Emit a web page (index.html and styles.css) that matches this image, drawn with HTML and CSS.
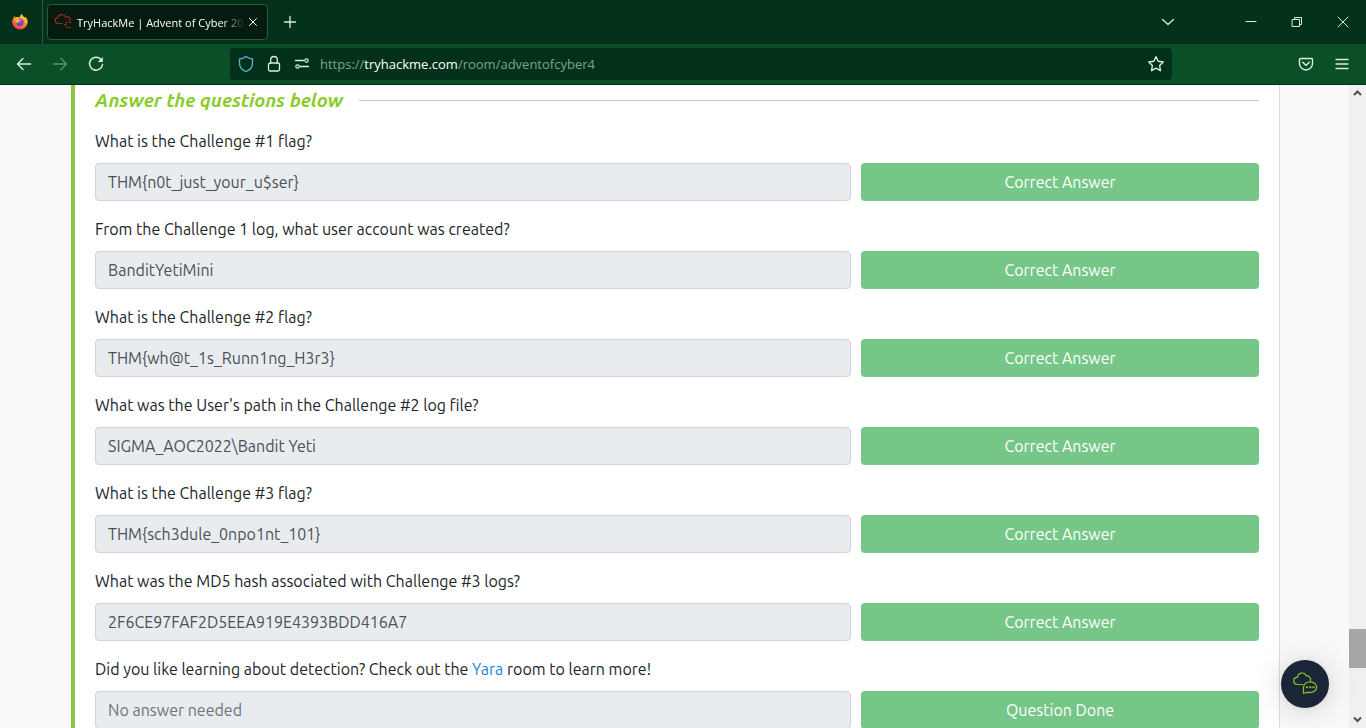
FILE: index.html
```html
<!DOCTYPE html>
<html lang="en">
<head>
<meta charset="utf-8">
<meta name="viewport" content="width=device-width, initial-scale=1">
<title>TryHackMe | Advent of Cyber 2022</title>
<link rel="stylesheet" href="styles.css">
</head>
<body>
<header class="browser">
  <div class="tabbar">
    <div class="pinned">
      <svg width="18" height="18" viewBox="0 0 18 18" aria-hidden="true">
        <defs>
          <linearGradient id="flame" x1="0.8" y1="0" x2="0.3" y2="1"><stop offset="0" stop-color="#ffe14a"/><stop offset="0.45" stop-color="#ff9a2a"/><stop offset="1" stop-color="#f0325c"/></linearGradient>
          <radialGradient id="globe" cx="0.5" cy="0.3" r="0.7"><stop offset="0" stop-color="#a257e8"/><stop offset="1" stop-color="#5b3bb5"/></radialGradient>
        </defs>
        <path fill="url(#flame)" d="M11 1c.3 1.600 1.600 2.400 2.600 3.500L14.500 4c1.600 1.600 2.400 3.500 2.200 5.600A7.800 7.800 0 0 1 1.200 9.500C1.100 7.200 2 5.400 3 4.200L3.400 3l1.300 1.400c1.300-.5 2.800-.5 4 .1C8.800 3 9.600 1.700 11 1z"/>
        <circle cx="9" cy="9.300" r="3.700" fill="url(#globe)"/>
        <path fill="#ffb02e" d="M4.700 5.600c1.400-.4 2.600 0 3.300.9l1.800.3c-.2 1-1.400 1.100-1.900 1.600.1 1.100-1 1.800-2.100 1.700-1-1.200-1.500-2.800-1.100-4.500z"/>
      </svg>
    </div>
    <div class="tab">
      <svg class="favicon" width="18" height="18" viewBox="0 0 18 18" fill="none" stroke="#a52523" stroke-width="1.200" stroke-linecap="round" aria-hidden="true">
        <path d="M8 10.500H4A3 3 0 0 1 3.600 4.600 4.300 4.300 0 0 1 11.600 4 3.200 3.200 0 0 1 16 8"/>
        <path d="M12 9.500h1.500M10.500 11.500h1.500M15.500 9.500h1M12.500 14.500h1.500M15.500 14.500h.8M11.500 12.500v.5" stroke-width="1.200"/>
      </svg>
      <span class="tab-title">TryHackMe | Advent of Cyber 20</span>
      <button class="icon-button tab-close" aria-label="Close tab"><svg width="16" height="16" viewBox="0 0 16 16"><path d="m4.500 4.500 7 7m0-7-7 7"/></svg></button>
    </div>
    <button class="icon-button new-tab" aria-label="New tab"><svg width="16" height="16" viewBox="0 0 16 16"><path d="M8 2.500v11M2.500 8h11" stroke-width="1.300"/></svg></button>
    <button class="icon-button list-tabs" aria-label="List all tabs"><svg width="16" height="16" viewBox="0 0 16 16"><path d="m2.500 5.500 5.500 5 5.500-5" stroke-width="1.300"/></svg></button>
    <div class="window-controls">
      <button class="icon-button" aria-label="Minimize"><svg width="12" height="12" viewBox="0 0 12 12"><path d="M1 5.500h10" stroke-width="1"/></svg></button>
      <button class="icon-button" aria-label="Restore"><svg width="12" height="12" viewBox="0 0 12 12"><path d="M1.500 3.500h7v7h-7zM3.500 3.500v-2h7v7h-2" stroke-width="1"/></svg></button>
      <button class="icon-button" aria-label="Close"><svg width="12" height="12" viewBox="0 0 12 12"><path d="m1 1 10 10m0-10L1 11" stroke-width="1"/></svg></button>
    </div>
  </div>
  <div class="toolbar">
    <nav class="nav-buttons" aria-label="History">
      <button class="icon-button" aria-label="Back"><svg width="18" height="18" viewBox="0 0 18 18"><path d="M15.500 9h-13m5.500-5.500L2.500 9 8 14.500" stroke-width="1.400"/></svg></button>
      <button class="icon-button" aria-label="Forward" disabled><svg width="18" height="18" viewBox="0 0 18 18"><path d="M2.500 9h13M10 3.500 15.500 9 10 14.500" stroke-width="1.400"/></svg></button>
      <button class="icon-button" aria-label="Reload"><svg width="18" height="18" viewBox="0 0 18 18"><path d="M13.800 4.200A6.500 6.500 0 1 0 15.500 9.500" stroke-width="1.500"/><path d="M15.800 2v5h-5z" fill="currentColor" stroke="none"/></svg></button>
    </nav>
    <div class="address">
      <button class="icon-button" aria-label="Tracking protection"><svg class="shield" width="18" height="18" viewBox="0 0 18 18"><defs><linearGradient id="shield" x1="1" y1="0" x2="0" y2="1"><stop offset="0" stop-color="#8a9cf0"/><stop offset="0.5" stop-color="#54b4e4"/><stop offset="1" stop-color="#3fc4d4"/></linearGradient></defs><path stroke="url(#shield)" stroke-width="1.300" d="M9 1.500q3 2.200 6.500 2.500v4c0 4-2.500 7-6.500 8.500C5 15 2.500 12 2.500 8V4Q6 3.700 9 1.500z"/></svg></button>
      <button class="icon-button" aria-label="Site security"><svg width="18" height="18" viewBox="0 0 18 18"><rect x="3.500" y="8" width="11" height="8" rx="1.500" stroke-width="1.300"/><path d="M5.700 8V4.800a3.300 3.300 0 0 1 6.600 0V8" stroke-width="1.300"/></svg></button>
      <button class="icon-button" aria-label="Site permissions"><svg width="18" height="18" viewBox="0 0 18 18"><path d="M2.500 5.500h8M7 11.500h8.500" stroke-width="1.300"/><circle cx="13.500" cy="5.500" r="1.700" stroke-width="1.200"/><circle cx="4.500" cy="11.500" r="1.700" stroke-width="1.200"/></svg></button>
      <a class="url" href="#">https://<span class="domain">tryhackme.com</span>/room/adventofcyber4</a>
      <button class="icon-button star" aria-label="Bookmark this page"><svg width="18" height="18" viewBox="0 0 18 18"><path d="m9 1.700 2.200 4.600 5.100.7-3.700 3.500.9 5.200L9 13.200l-4.500 2.500.9-5.200L1.700 7l5.100-.7z" stroke-width="1.400"/></svg></button>
    </div>
    <div class="tools">
      <button class="icon-button" aria-label="Save to Pocket"><svg width="16" height="16" viewBox="0 0 16 16"><path d="M2.500 2.500h11a1 1 0 0 1 1 1v4a6.500 6.500 0 0 1-13 0v-4a1 1 0 0 1 1-1z" stroke-width="1.400"/><path d="m4.700 6.300 3.300 3 3.300-3" stroke-width="1.500"/></svg></button>
      <button class="icon-button" aria-label="Open application menu"><svg width="16" height="16" viewBox="0 0 16 16"><path d="M2 3.500h12M2 8h12M2 12.500h12" stroke-width="1.300"/></svg></button>
    </div>
  </div>
</header>
<div class="viewport">
  <main class="page">
    <form class="task">
      <div class="task-head"><h2>Answer the questions below</h2></div>
      <div class="question">
        <label for="q1">What is the Challenge #1 flag?</label>
        <div class="answer"><input id="q1" type="text" readonly value="THM{n0t_just_your_u$ser}"><button type="button">Correct Answer</button></div>
      </div>
      <div class="question">
        <label for="q2">From the Challenge 1 log, what user account was created?</label>
        <div class="answer"><input id="q2" type="text" readonly value="BanditYetiMini"><button type="button">Correct Answer</button></div>
      </div>
      <div class="question">
        <label for="q3">What is the Challenge #2 flag?</label>
        <div class="answer"><input id="q3" type="text" readonly value="THM{wh@t_1s_Runn1ng_H3r3}"><button type="button">Correct Answer</button></div>
      </div>
      <div class="question">
        <label for="q4">What was the User's path in the Challenge #2 log file?</label>
        <div class="answer"><input id="q4" type="text" readonly value="SIGMA_AOC2022\Bandit Yeti"><button type="button">Correct Answer</button></div>
      </div>
      <div class="question">
        <label for="q5">What is the Challenge #3 flag?</label>
        <div class="answer"><input id="q5" type="text" readonly value="THM{sch3dule_0npo1nt_101}"><button type="button">Correct Answer</button></div>
      </div>
      <div class="question">
        <label for="q6">What was the MD5 hash associated with Challenge #3 logs?</label>
        <div class="answer"><input id="q6" type="text" readonly value="2F6CE97FAF2D5EEA919E4393BDD416A7"><button type="button">Correct Answer</button></div>
      </div>
      <div class="question">
        <label for="q7">Did you like learning about detection? Check out the <a href="#">Yara</a> room to learn more!</label>
        <div class="answer"><input id="q7" type="text" readonly placeholder="No answer needed"><button type="button">Question Done</button></div>
      </div>
    </form>
  </main>
  <div class="scrollbar" aria-hidden="true">
    <svg width="17" height="17" viewBox="0 0 17 17"><path d="m5 10 3.500-3.500L12 10"/></svg>
    <div class="track"><div class="thumb"></div></div>
    <svg width="17" height="17" viewBox="0 0 17 17"><path d="m5 6.500 3.500 3.500 3.500-3.500"/></svg>
  </div>
  <button class="chat" aria-label="Open chat">
    <svg width="26" height="24" viewBox="0 0 26 24" fill="none" stroke="#84c225" stroke-width="1.200" stroke-linecap="round" stroke-linejoin="round">
      <path d="M10.500 12.500H5a3.600 3.600 0 0 1-.5-7.100h1A4.600 4.600 0 0 1 14.400 4a3.500 3.500 0 0 1 4 4.500"/>
      <path d="M11.500 21.500V15a6.600 5.400 0 1 1 6.600 5.600q-1.300 0-2.600-.5z"/>
      <path d="M14.700 15.300h.5M18 15.300h.5M21.300 15.300h.5" stroke-width="2"/>
    </svg>
  </button>
</div>
</body>
</html>
```
FILE: styles.css
```css
* { box-sizing: border-box; }

body {
  margin: 0;
  height: 100vh;
  display: flex;
  flex-direction: column;
  overflow: hidden;
  background: #f9f9f9;
  color: #212529;
  font-family: Ubuntu, "Noto Sans", sans-serif;
  font-size: 16px;
}

button, input { font: inherit; }

.browser {
  flex: none;
  background: #033018;
  color: #d9efdc;
  font-family: "Open Sans", "Noto Sans", sans-serif;
}

.icon-button {
  display: flex;
  align-items: center;
  justify-content: center;
  padding: 0;
  border: 0;
  background: none;
  color: inherit;
}

.icon-button svg {
  fill: none;
  stroke: currentColor;
  stroke-linecap: round;
  stroke-linejoin: round;
}

.icon-button:disabled { opacity: 0.4; }

.tabbar {
  display: flex;
  align-items: center;
  height: 44px;
}

.pinned {
  display: flex;
  align-items: center;
  justify-content: center;
  width: 43px;
  height: 44px;
  padding-right: 2px;
  border-right: 1px solid #35593f;
}

.tab {
  display: flex;
  align-items: center;
  width: 221px;
  height: 36px;
  margin-left: 4px;
  padding: 0 6px;
  border: 1px solid #285c3a;
  border-radius: 4px;
  background: #041c10;
  color: #fff;
  font-size: 12px;
}

.favicon { flex: none; }

.tab-title {
  flex: 1;
  margin-left: 5px;
  overflow: hidden;
  font-size: 11px;
  white-space: nowrap;
  mask-image: linear-gradient(to left, transparent, #000 24px);
}

.tab-close { width: 16px; height: 24px; }

.new-tab { width: 32px; height: 32px; margin-left: 6px; }

.list-tabs { width: 32px; height: 32px; margin-left: auto; }

.window-controls {
  display: flex;
  margin-left: 44px;
}

.window-controls .icon-button { width: 46px; height: 44px; }

.toolbar {
  display: grid;
  grid-template-columns: 230px 1fr 194px;
  align-items: center;
  height: 41px;
  border-bottom: 1px solid #03301b;
  background: #0b4f28;
}

.nav-buttons { display: flex; padding-left: 6px; }

.nav-buttons .icon-button, .tools .icon-button { width: 36px; height: 32px; }

.address {
  display: flex;
  align-items: center;
  height: 32px;
  padding: 0 2px;
  border-radius: 4px;
  background: #033018;
}

.address .icon-button { width: 28px; height: 28px; }

.url {
  flex: 1;
  margin-left: 4px;
  color: #7da487;
  font-size: 13px;
  text-decoration: none;
}

.domain { color: #fff; }

.tools { display: flex; justify-content: flex-end; padding-right: 6px; }

.viewport {
  position: relative;
  flex: 1;
  display: flex;
  min-height: 0;
}

.page {
  flex: 1;
  min-width: 0;
  padding: 0 69px 0 71px;
  overflow: hidden;
}

.task {
  padding: 4px 20px 20px;
  border-left: 4px solid #8bc63f;
  border-right: 1px solid #dcdcdc;
  background: #fff;
}

.task-head {
  display: flex;
  align-items: center;
  gap: 16px;
  margin-bottom: 18px;
}

.task-head::after {
  content: "";
  flex: 1;
  height: 1px;
  background: #c8c8c8;
}

.task-head h2 {
  margin: 0;
  color: #88cc28;
  font-size: 19px;
  font-style: italic;
  font-weight: 700;
  line-height: 22px;
}

.question { margin-bottom: 16px; }

.question label {
  display: block;
  margin-bottom: 10px;
  line-height: 24px;
}

.question a { color: #1b7fdb; text-decoration: none; }

.answer {
  display: grid;
  grid-template-columns: 19fr 10fr;
  gap: 10px;
}

.answer input {
  min-width: 0;
  height: 38px;
  padding: 0 12px;
  border: 1px solid #ced4da;
  border-radius: 4px;
  background: #e9ecef;
  color: #495057;
}

.answer input::placeholder { color: #6c757d; opacity: 1; }

.answer button {
  height: 38px;
  padding: 0 12px;
  border: 0;
  border-radius: 4px;
  background: #75c687;
  color: #fff;
}

.scrollbar {
  flex: none;
  display: flex;
  flex-direction: column;
  width: 17px;
  background: #f0f0f0;
}

.scrollbar svg { fill: none; stroke: #505050; stroke-width: 2; }

.track {
  flex: 1;
  display: flex;
  flex-direction: column;
  justify-content: flex-end;
  padding-bottom: 43px;
}

.thumb { height: 39px; background: #a6a6a6; }

.chat {
  position: absolute;
  right: 37px;
  bottom: 20px;
  display: flex;
  align-items: center;
  justify-content: center;
  width: 48px;
  height: 48px;
  padding: 0;
  border: 0;
  border-radius: 50%;
  background: #1c2538;
  box-shadow: 0 1px 6px rgba(0, 0, 0, 0.06), 0 2px 32px rgba(0, 0, 0, 0.16);
}
```
